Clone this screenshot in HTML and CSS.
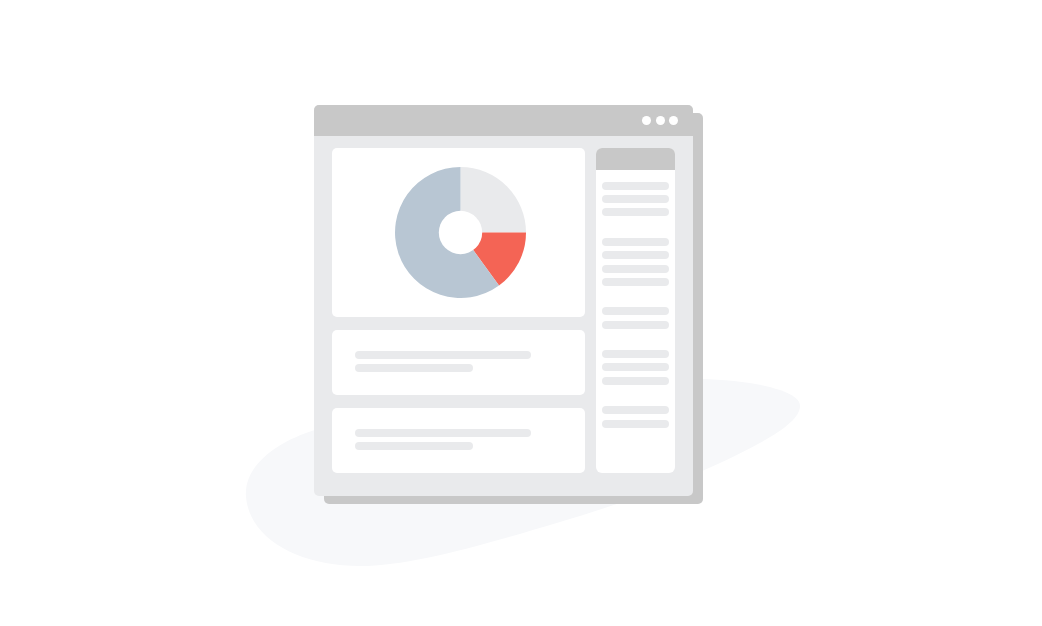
FILE: index.html
```html
<!DOCTYPE html>
<html lang="en">
<head>
<meta charset="utf-8">
<title>Dashboard illustration</title>
<link rel="stylesheet" href="styles.css">
</head>
<body>
<div class="stage">
  <svg class="blob" width="1042" height="626" viewBox="0 0 1042 626" aria-hidden="true">
    <path d="M246 497 C243 462 285 436 330 426 L700 379 C750 380 800 390 800 406 C800 424 760 445 700 472 C650 494 600 510 560 522 C480 546 410 566 360 566 C300 566 250 540 246 497 Z" fill="#f7f8fa"/>
  </svg>
  <div class="window">
    <div class="titlebar">
      <span class="dot"></span><span class="dot"></span><span class="dot"></span>
    </div>
    <div class="content">
      <div class="main">
        <div class="card chart-card">
          <svg class="donut" width="131" height="131" viewBox="0 0 131 131" aria-hidden="true">
            <path d="M65.5 65.5 L65.5 0 A65.5 65.5 0 0 1 131 65.5 Z" fill="#e9eaec"/>
            <path d="M65.5 65.5 L131 65.5 A65.5 65.5 0 0 1 104 118.5 Z" fill="#f46455"/>
            <path d="M65.5 65.5 L104 118.5 A65.5 65.5 0 1 1 65.5 0 Z" fill="#b8c6d3"/>
            <circle cx="65.5" cy="65.5" r="21.7" fill="#ffffff"/>
          </svg>
        </div>
        <div class="card text-card">
          <div class="bar bar-long"></div>
          <div class="bar bar-short"></div>
        </div>
        <div class="card text-card">
          <div class="bar bar-long"></div>
          <div class="bar bar-short"></div>
        </div>
      </div>
      <div class="sidebar">
        <div class="side-head"></div>
        <div class="side-body">
          <div class="group"><div class="line"></div><div class="line"></div><div class="line"></div></div>
          <div class="group"><div class="line"></div><div class="line"></div><div class="line"></div><div class="line"></div></div>
          <div class="group"><div class="line"></div><div class="line"></div></div>
          <div class="group"><div class="line"></div><div class="line"></div><div class="line"></div></div>
          <div class="group"><div class="line"></div><div class="line"></div></div>
        </div>
      </div>
    </div>
  </div>
</div>
</body>
</html>
```
FILE: styles.css
```css
* { box-sizing: border-box; }
html, body {
  margin: 0;
  padding: 0;
  background: #ffffff;
  font-family: "Liberation Sans", Arial, sans-serif;
}
.stage {
  position: relative;
  width: 1042px;
  height: 626px;
  padding: 105px 0 0 314px;
  overflow: hidden;
}
.blob {
  position: absolute;
  left: 0;
  top: 0;
  z-index: 0;
}
.window {
  position: relative;
  z-index: 1;
  width: 379px;
  height: 391px;
  background: #e9eaec;
  border-radius: 5px;
  box-shadow: 10px 8px 0 #c8c8c8;
  overflow: hidden;
  display: flex;
  flex-direction: column;
}
.titlebar {
  height: 31px;
  flex: none;
  background: #c8c8c8;
  display: flex;
  justify-content: flex-end;
  align-items: center;
  gap: 4.3px;
  padding-right: 15px;
}
.dot {
  width: 9px;
  height: 9px;
  border-radius: 50%;
  background: #ffffff;
}
.content {
  flex: 1;
  display: flex;
  gap: 11px;
  padding: 12px 18px 23px 18px;
}
.main {
  width: 253px;
  display: flex;
  flex-direction: column;
  gap: 13px;
}
.card {
  background: #ffffff;
  border-radius: 5px;
}
.chart-card {
  height: 169px;
  display: flex;
  align-items: center;
  justify-content: center;
}
.donut {
  display: block;
  margin-left: 4px;
}
.text-card {
  height: 65px;
  padding: 21px 0 0 23px;
  display: flex;
  flex-direction: column;
  gap: 5px;
}
.bar {
  height: 8px;
  border-radius: 4px;
  background: #e9eaec;
}
.bar-long { width: 176px; }
.bar-short { width: 118px; }
.sidebar {
  width: 79px;
  background: #ffffff;
  border-radius: 6px;
  overflow: hidden;
}
.side-head {
  height: 22px;
  background: #c8c8c8;
}
.side-body {
  padding: 11.7px 6px 0 6px;
  display: flex;
  flex-direction: column;
  gap: 21.5px;
}
.group {
  display: flex;
  flex-direction: column;
  gap: 5.33px;
}
.line {
  height: 8px;
  border-radius: 4px;
  background: #e9eaec;
}
```
